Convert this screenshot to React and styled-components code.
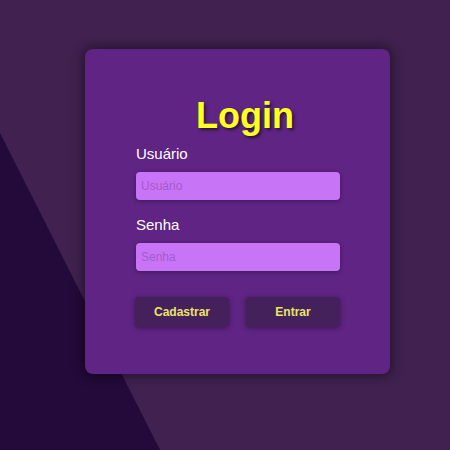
import React from 'react'
import styled, { createGlobalStyle } from 'styled-components'

const GlobalStyle = createGlobalStyle`
  html, body {
    margin: 0;
    padding: 0;
    background: #40214f;
    font-family: "Liberation Sans", Arial, sans-serif;
  }
`

const Page = styled.div`
  position: relative;
  width: 450px;
  height: 450px;
  overflow: hidden;
  padding: 49px 0 0 85px;
  box-sizing: border-box;

  &::before {
    content: '';
    position: absolute;
    inset: 0;
    background: #230a3a;
    clip-path: polygon(0 133px, 160px 450px, 0 450px);
  }
`

const Card = styled.form`
  position: relative;
  width: 305px;
  height: 325px;
  box-sizing: border-box;
  padding: 47px 50px 0 51px;
  background: #5f2484;
  border-radius: 8px;
  box-shadow: 0 0 12px 2px rgba(0, 0, 0, 0.45);
  display: flex;
  flex-direction: column;
`

const Title = styled.h1`
  margin: 0 0 9px;
  padding-left: 14px;
  text-align: center;
  font-size: 36px;
  line-height: 40px;
  font-weight: 700;
  color: #ffff1f;
  text-shadow: 2px 2px 3px rgba(0, 0, 0, 0.55);
`

const Label = styled.label`
  display: block;
  font-size: 15px;
  line-height: 18px;
  color: #ffffff;
  margin-bottom: 9px;
`

const Input = styled.input`
  display: block;
  width: 100%;
  height: 28px;
  box-sizing: border-box;
  border: none;
  outline: none;
  border-radius: 4px;
  padding: 0 5px;
  margin-bottom: ${(p) => p.$gap}px;
  background: #c874f6;
  font-family: "Liberation Sans", Arial, sans-serif;
  font-size: 12px;
  color: #3a0f55;
  box-shadow: 0 1px 4px rgba(0, 0, 0, 0.35);

  &::placeholder {
    color: #a45ccc;
  }
`

const Actions = styled.div`
  display: flex;
  justify-content: space-between;
  margin-left: -1px;
`

const Button = styled.button`
  width: 94px;
  height: 30px;
  border: none;
  border-radius: 4px;
  background: #45215c;
  color: #ece36a;
  font-family: "Liberation Sans", Arial, sans-serif;
  font-size: 12px;
  font-weight: 700;
  box-shadow: 0 1px 5px rgba(0, 0, 0, 0.4);
  cursor: pointer;
`

export default function App() {
  return (
    <>
      <GlobalStyle />
      <Page>
        <Card onSubmit={(e) => e.preventDefault()}>
          <Title>Login</Title>
          <Label htmlFor="user">Usuário</Label>
          <Input id="user" placeholder="Usuário" $gap={16} />
          <Label htmlFor="pass">Senha</Label>
          <Input id="pass" type="password" placeholder="Senha" $gap={26} />
          <Actions>
            <Button type="button">Cadastrar</Button>
            <Button type="submit">Entrar</Button>
          </Actions>
        </Card>
      </Page>
    </>
  )
}
